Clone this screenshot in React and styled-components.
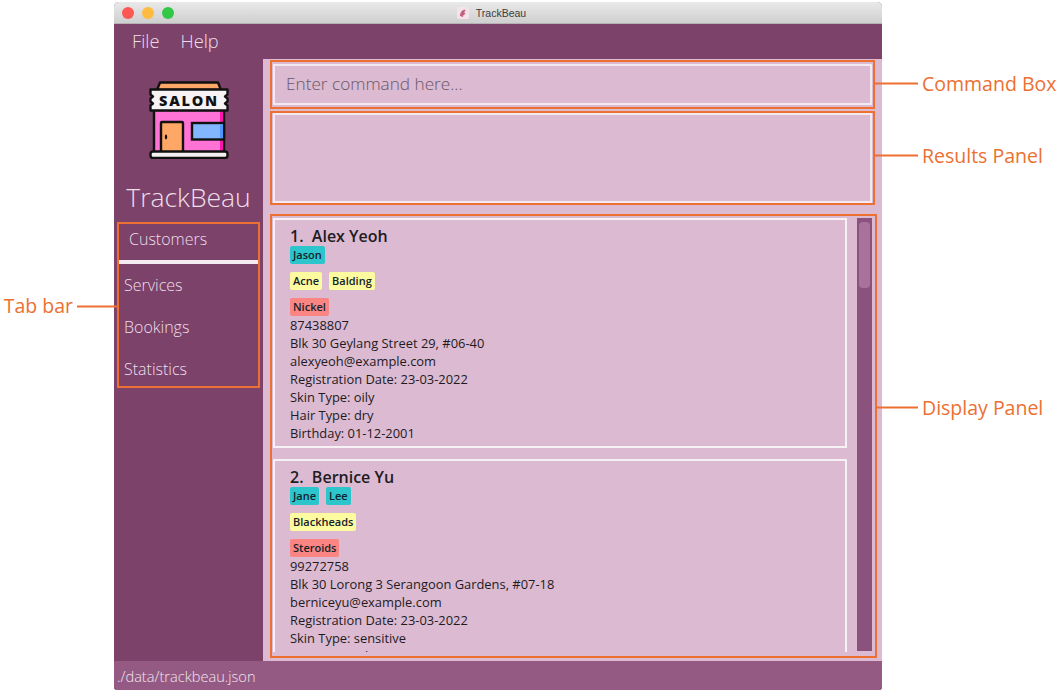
import React from 'react';
import styled, { createGlobalStyle } from 'styled-components';

const orange = '#ec7031';

const Global = createGlobalStyle`
  html, body { margin: 0; padding: 0; background: #fff; }
  body { font-family: "Open Sans", "Liberation Sans", sans-serif; }
`;

const Page = styled.div`
  width: 1059px;
  height: 693px;
  padding: 2px 0 0 114px;
  box-sizing: border-box;
  overflow: hidden;
`;

const Window = styled.div`
  width: 768px;
  height: 688px;
  display: flex;
  flex-direction: column;
  background: #7c4269;
  border-radius: 5px 5px 3px 3px;
`;

const TitleBar = styled.div`
  height: 22px;
  flex: none;
  display: flex;
  align-items: center;
  justify-content: center;
  gap: 6px;
  position: relative;
  box-sizing: border-box;
  padding-right: 14px;
  border-bottom: 1px solid #b4b2b4;
  border-radius: 5px 5px 0 0;
  background: linear-gradient(#e9e9e9, #cfcfcf);
  font-family: "Liberation Sans", sans-serif;
  font-size: 10.5px;
  color: #3c3c3c;
`;

const Lights = styled.div`
  position: absolute;
  left: 8px;
  top: 5px;
  display: flex;
  gap: 8px;
`;

const Light = styled.span`
  width: 12px;
  height: 12px;
  border-radius: 50%;
  background: ${(p) => p.$color};
`;

const MenuBar = styled.div`
  height: 35px;
  flex: none;
  display: flex;
  align-items: center;
  gap: 21px;
  padding: 0 0 2px 18px;
  box-sizing: border-box;
  font-size: 18.3px;
  font-weight: 300;
  color: #ecdfe9;
`;

const Body = styled.div`
  flex: 1;
  min-height: 0;
  display: flex;
`;

const Sidebar = styled.div`
  width: 149px;
  flex: none;
  display: flex;
  flex-direction: column;
  align-items: flex-start;
`;

const Brand = styled.div`
  align-self: stretch;
  height: 163px;
  display: flex;
  flex-direction: column;
  align-items: center;
  padding-top: 22px;
  box-sizing: border-box;
`;

const BrandName = styled.div`
  margin-top: 20px;
  font-size: 26.5px;
  line-height: 36px;
  font-weight: 300;
  color: #ecdfe9;
`;

const TabFrame = styled.div`
  position: relative;
  width: 143px;
  height: 166px;
  margin-left: 3px;
  box-sizing: border-box;
  border: 2px solid ${orange};
  display: flex;
  flex-direction: column;
`;

const Tab = styled.div`
  height: ${(p) => (p.$active ? '36px' : '42px')};
  flex: none;
  box-sizing: border-box;
  display: flex;
  align-items: center;
  padding-left: ${(p) => (p.$active ? '10px' : '5px')};
  padding-bottom: ${(p) => (p.$active ? '6px' : '0')};
  font-size: 16px;
  font-weight: 300;
  color: #ecdfe9;
`;

const TabLine = styled.div`
  height: 4px;
  flex: none;
  background: #f3ebf1;
`;

const Main = styled.div`
  flex: 1;
  min-width: 0;
  background: #dbbad2;
  display: flex;
  flex-direction: column;
  padding: 1px 0 0 7px;
`;

const Frame = styled.div`
  position: relative;
  width: ${(p) => p.$width}px;
  height: ${(p) => p.$height}px;
  margin-bottom: ${(p) => p.$after || 0}px;
  flex: none;
  box-sizing: border-box;
  border: 2px solid ${orange};
  padding: ${(p) => p.$pad || '2px 1px'};
  display: flex;
`;

const InnerBox = styled.div`
  flex: 1;
  box-sizing: border-box;
  border: 2px solid #f2eaf0;
  display: flex;
  align-items: center;
`;

const CommandInput = styled.input`
  width: 100%;
  border: 0;
  outline: 0;
  background: transparent;
  padding: 0 0 2px 11px;
  font-family: "Open Sans", sans-serif;
  font-size: 17.2px;
  font-weight: 300;
  color: #3c2c38;
  &::placeholder { color: #6a5866; opacity: 1; }
`;

const ListWrap = styled.div`
  flex: 1;
  display: flex;
  align-items: flex-start;
  gap: 10px;
  min-height: 0;
  height: 434px;
`;

const CardList = styled.div`
  flex: 1;
  min-width: 0;
  height: 434px;
  overflow: hidden;
  display: flex;
  flex-direction: column;
  gap: 11px;
`;

const Card = styled.div`
  flex: none;
  box-sizing: border-box;
  border: 2px solid #f6f1f5;
  padding: 6px 14px 4px 15px;
  height: 230px;
  color: #1f1a1e;
`;

const Name = styled.div`
  font-size: 16px;
  line-height: 20px;
  font-weight: 600;
  color: #221c21;
  white-space: pre;
`;

const TagRow = styled.div`
  display: flex;
  gap: 7px;
  height: 18px;
  margin-top: ${(p) => p.$top}px;
`;

const Tag = styled.span`
  height: 18px;
  box-sizing: border-box;
  padding: 0 3px;
  border-radius: 2px;
  font-size: 11px;
  font-weight: 600;
  line-height: 18px;
  color: #14222b;
  background: ${(p) => p.$bg};
`;

const Line = styled.div`
  font-size: 12.9px;
  line-height: 18px;
  white-space: nowrap;
`;

const ScrollTrack = styled.div`
  width: 15px;
  height: 433px;
  flex: none;
  background: #8b527d;
  padding: 4px 2px;
  box-sizing: border-box;
  margin-right: 1px;
`;

const ScrollThumb = styled.div`
  width: 11px;
  height: 66px;
  border-radius: 4px;
  background: #a9729a;
`;

const StatusBar = styled.div`
  height: 29px;
  flex: none;
  display: flex;
  align-items: center;
  padding-left: 3px;
  background: #955a84;
  font-size: 14.6px;
  font-weight: 300;
  color: #f0e6ee;
  border-radius: 0 0 3px 3px;
`;

const Callout = styled.div`
  position: absolute;
  top: ${(p) => p.$top}px;
  transform: translateY(-50%);
  display: flex;
  align-items: center;
  gap: 4px;
  white-space: nowrap;
  font-family: "Open Sans", sans-serif;
  font-size: 19.5px;
  color: ${orange};
  ${(p) => (p.$side === 'left' ? 'right: 100%;' : 'left: 100%;')}
`;

const CalloutLine = styled.span`
  width: ${(p) => p.$width}px;
  height: 2px;
  margin-top: ${(p) => p.$drop || 0}px;
  background: ${orange};
`;

function SalonLogo() {
  return (
    <svg width="80" height="78" viewBox="0 0 80 78">
      <path d="M8 9 L11 1.5 H69 L72 9 Z" fill="#ffa766" stroke="#111" strokeWidth="2.4" strokeLinejoin="round" />
      <rect x="5" y="29" width="70" height="43" fill="#ff73d6" stroke="#111" strokeWidth="2.4" />
      <rect x="71" y="30" width="3" height="41" fill="#ff14ae" />
      <rect x="12" y="41" width="22" height="31" rx="1" fill="#ffa766" stroke="#111" strokeWidth="2.4" />
      <ellipse cx="17" cy="56" rx="1.2" ry="2.4" fill="#111" />
      <rect x="43" y="42" width="32" height="16.5" fill="#82b7ff" stroke="#111" strokeWidth="2.4" />
      <rect x="71" y="43.5" width="3" height="13.5" fill="#4d95ff" />
      <path d="M1.5 8.5 H78.5 V13.5 L76 15.5 L78.5 17.5 V20.5 L76 22.5 L78.5 24.5 V29.5 H1.5 V24.5 L4 22.5 L1.5 20.5 V17.5 L4 15.5 L1.5 13.5 Z" fill="#f7f3f5" stroke="#111" strokeWidth="2.4" strokeLinejoin="round" />
      <text x="40" y="24.5" textAnchor="middle" fontFamily="'Open Sans', sans-serif" fontSize="14.5" fontWeight="800" letterSpacing="1.8" fill="#111">SALON</text>
      <rect x="1.5" y="70.5" width="77" height="6.5" rx="2.5" fill="#f4f0f2" stroke="#111" strokeWidth="2.4" />
    </svg>
  );
}

function AppIcon() {
  return (
    <svg width="14" height="14" viewBox="0 0 14 14">
      <rect x="1" y="1" width="12" height="12" rx="2" fill="#f4e3e8" />
      <path d="M4 10 C4 6 7 3 10 4 C8 5 8 7 9.5 8 C8 8.5 7 9 7 11 Z" fill="#c2607f" />
    </svg>
  );
}

const customers = [
  {
    id: 1,
    name: 'Alex Yeoh',
    staff: ['Jason'],
    issues: ['Acne', 'Balding'],
    allergies: ['Nickel'],
    lines: ['87438807', 'Blk 30 Geylang Street 29, #06-40', 'alexyeoh@example.com', 'Registration Date: 23-03-2022', 'Skin Type: oily', 'Hair Type: dry', 'Birthday: 01-12-2001'],
  },
  {
    id: 2,
    name: 'Bernice Yu',
    staff: ['Jane', 'Lee'],
    issues: ['Blackheads'],
    allergies: ['Steroids'],
    lines: ['99272758', 'Blk 30 Lorong 3 Serangoon Gardens, #07-18', 'berniceyu@example.com', 'Registration Date: 23-03-2022', 'Skin Type: sensitive', 'Hair Type: oily', 'Birthday: 21-04-1999'],
  },
];

function CustomerCard({ customer }) {
  return (
    <Card>
      <Name>{customer.id}.  {customer.name}</Name>
      <TagRow $top={0}>
        {customer.staff.map((t) => <Tag key={t} $bg="#2bc5cb">{t}</Tag>)}
      </TagRow>
      <TagRow $top={8}>
        {customer.issues.map((t) => <Tag key={t} $bg="#fdfb9f">{t}</Tag>)}
      </TagRow>
      <TagRow $top={8}>
        {customer.allergies.map((t) => <Tag key={t} $bg="#fb8583">{t}</Tag>)}
      </TagRow>
      {customer.lines.map((l) => <Line key={l}>{l}</Line>)}
    </Card>
  );
}

export default function App() {
  return (
    <Page>
      <Global />
      <Window>
        <TitleBar>
          <Lights>
            <Light $color="#fc5753" />
            <Light $color="#fdbc40" />
            <Light $color="#33c748" />
          </Lights>
          <AppIcon />
          <span>TrackBeau</span>
        </TitleBar>
        <MenuBar>
          <span>File</span>
          <span>Help</span>
        </MenuBar>
        <Body>
          <Sidebar>
            <Brand>
              <SalonLogo />
              <BrandName>TrackBeau</BrandName>
            </Brand>
            <TabFrame>
              <Callout $side="left" $top={81}>
                <span>Tab bar</span>
                <CalloutLine $width={42} $drop={3} />
              </Callout>
              <Tab $active>Customers</Tab>
              <TabLine />
              <Tab>Services</Tab>
              <Tab>Bookings</Tab>
              <Tab>Statistics</Tab>
            </TabFrame>
          </Sidebar>
          <Main>
            <Frame $width={605} $height={49} $after={2}>
              <InnerBox>
                <CommandInput placeholder="Enter command here..." readOnly />
              </InnerBox>
              <Callout $top={21}>
                <CalloutLine $width={45} />
                <span>Command Box</span>
              </Callout>
            </Frame>
            <Frame $width={605} $height={94} $after={9} $pad="0 1px 0 1px">
              <InnerBox />
              <Callout $top={42}>
                <CalloutLine $width={45} />
                <span>Results Panel</span>
              </Callout>
            </Frame>
            <Frame $width={607} $height={444} $pad="2px 2px 4px 1px">
              <ListWrap>
                <CardList>
                  {customers.map((c) => <CustomerCard key={c.id} customer={c} />)}
                </CardList>
                <ScrollTrack>
                  <ScrollThumb />
                </ScrollTrack>
              </ListWrap>
              <Callout $top={191}>
                <CalloutLine $width={43} />
                <span>Display Panel</span>
              </Callout>
            </Frame>
          </Main>
        </Body>
        <StatusBar>./data/trackbeau.json</StatusBar>
      </Window>
    </Page>
  );
}
